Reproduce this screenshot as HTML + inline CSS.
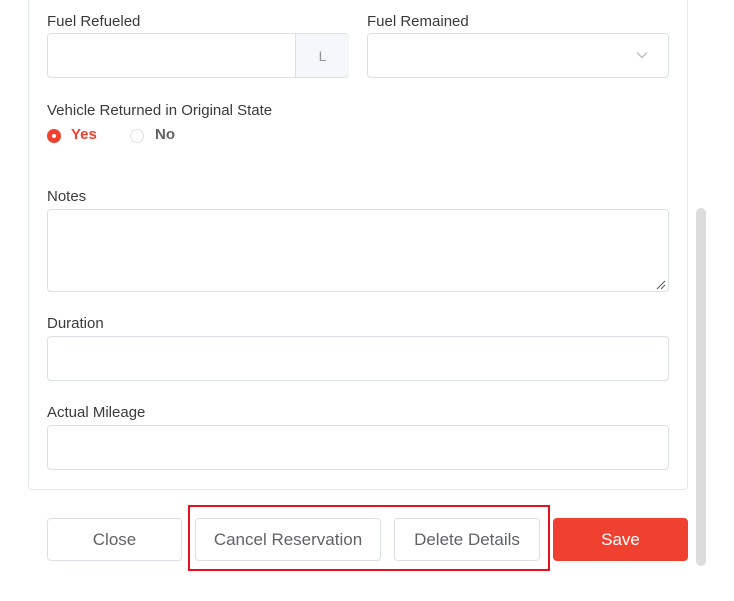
<!DOCTYPE html>
<html><head><style>
body{margin:0;width:734px;height:601px;background:#fff;font-family:"Liberation Sans",sans-serif;position:relative;overflow:hidden;color:#333}
.a{position:absolute}
.lbl{font-size:15px;color:#3a3a3a}
.inp{border:1px solid #dcdfe6;border-radius:4px;box-sizing:border-box;background:#fff}
.btn{border:1px solid #dcdfe6;border-radius:4px;box-sizing:border-box;height:43px;top:518px;display:flex;align-items:center;justify-content:center;font-size:17px;color:#606266;background:#fff}
</style></head><body>
<div class="a" style="left:28px;top:-10px;width:660px;height:500px;border:1px solid #e4e7ed;border-radius:4px;box-sizing:border-box"></div>
<div class="a lbl" style="left:47px;top:13px">Fuel Refueled</div>
<div class="a inp" style="left:47px;top:33px;width:302px;height:45px"></div>
<div class="a" style="left:295px;top:34px;width:53px;height:43px;background:#f5f7fa;border-left:1px solid #dcdfe6;border-radius:0 4px 4px 0;display:flex;align-items:center;justify-content:center;color:#909399;font-size:14px">L</div>
<div class="a lbl" style="left:367px;top:13px">Fuel Remained</div>
<div class="a inp" style="left:367px;top:33px;width:302px;height:45px"></div>
<svg class="a" style="left:636px;top:51px" width="12" height="8"><path d="M1 1.5L6 6.5L11 1.5" fill="none" stroke="#b0b3b8" stroke-width="1.2"/></svg>
<div class="a lbl" style="left:47px;top:102px">Vehicle Returned in Original State</div>
<div class="a" style="left:47px;top:129px;width:14px;height:14px;border-radius:50%;background:#f04130"></div>
<div class="a" style="left:52px;top:134px;width:4px;height:4px;border-radius:50%;background:#fff"></div>
<div class="a" style="left:71px;top:126px;font-size:15px;font-weight:bold;color:#f04130">Yes</div>
<div class="a" style="left:130px;top:129px;width:14px;height:14px;border-radius:50%;border:1px solid #dcdfe6;box-sizing:border-box"></div>
<div class="a" style="left:155px;top:126px;font-size:15px;font-weight:bold;color:#606266">No</div>
<div class="a lbl" style="left:47px;top:188px">Notes</div>
<div class="a inp" style="left:47px;top:209px;width:622px;height:83px"></div>
<svg class="a" style="left:656px;top:280px" width="10" height="10"><path d="M1 9L9 1M5 9L9 5" stroke="#555" stroke-width="1"/></svg>
<div class="a lbl" style="left:47px;top:315px">Duration</div>
<div class="a inp" style="left:47px;top:336px;width:622px;height:45px"></div>
<div class="a lbl" style="left:47px;top:404px">Actual Mileage</div>
<div class="a inp" style="left:47px;top:425px;width:622px;height:45px"></div>
<div class="a" style="left:696px;top:208px;width:10px;height:358px;background:#dcdcdc;border-radius:5px"></div>
<div class="a btn" style="left:47px;width:135px">Close</div>
<div class="a btn" style="left:195px;width:186px">Cancel Reservation</div>
<div class="a btn" style="left:394px;width:146px">Delete Details</div>
<div class="a btn" style="left:553px;width:135px;background:#f04130;border-color:#f04130;color:#fff">Save</div>
<div class="a" style="left:188px;top:505px;width:362px;height:66px;border:2px solid #e8101c;box-sizing:border-box"></div>
</body></html>
